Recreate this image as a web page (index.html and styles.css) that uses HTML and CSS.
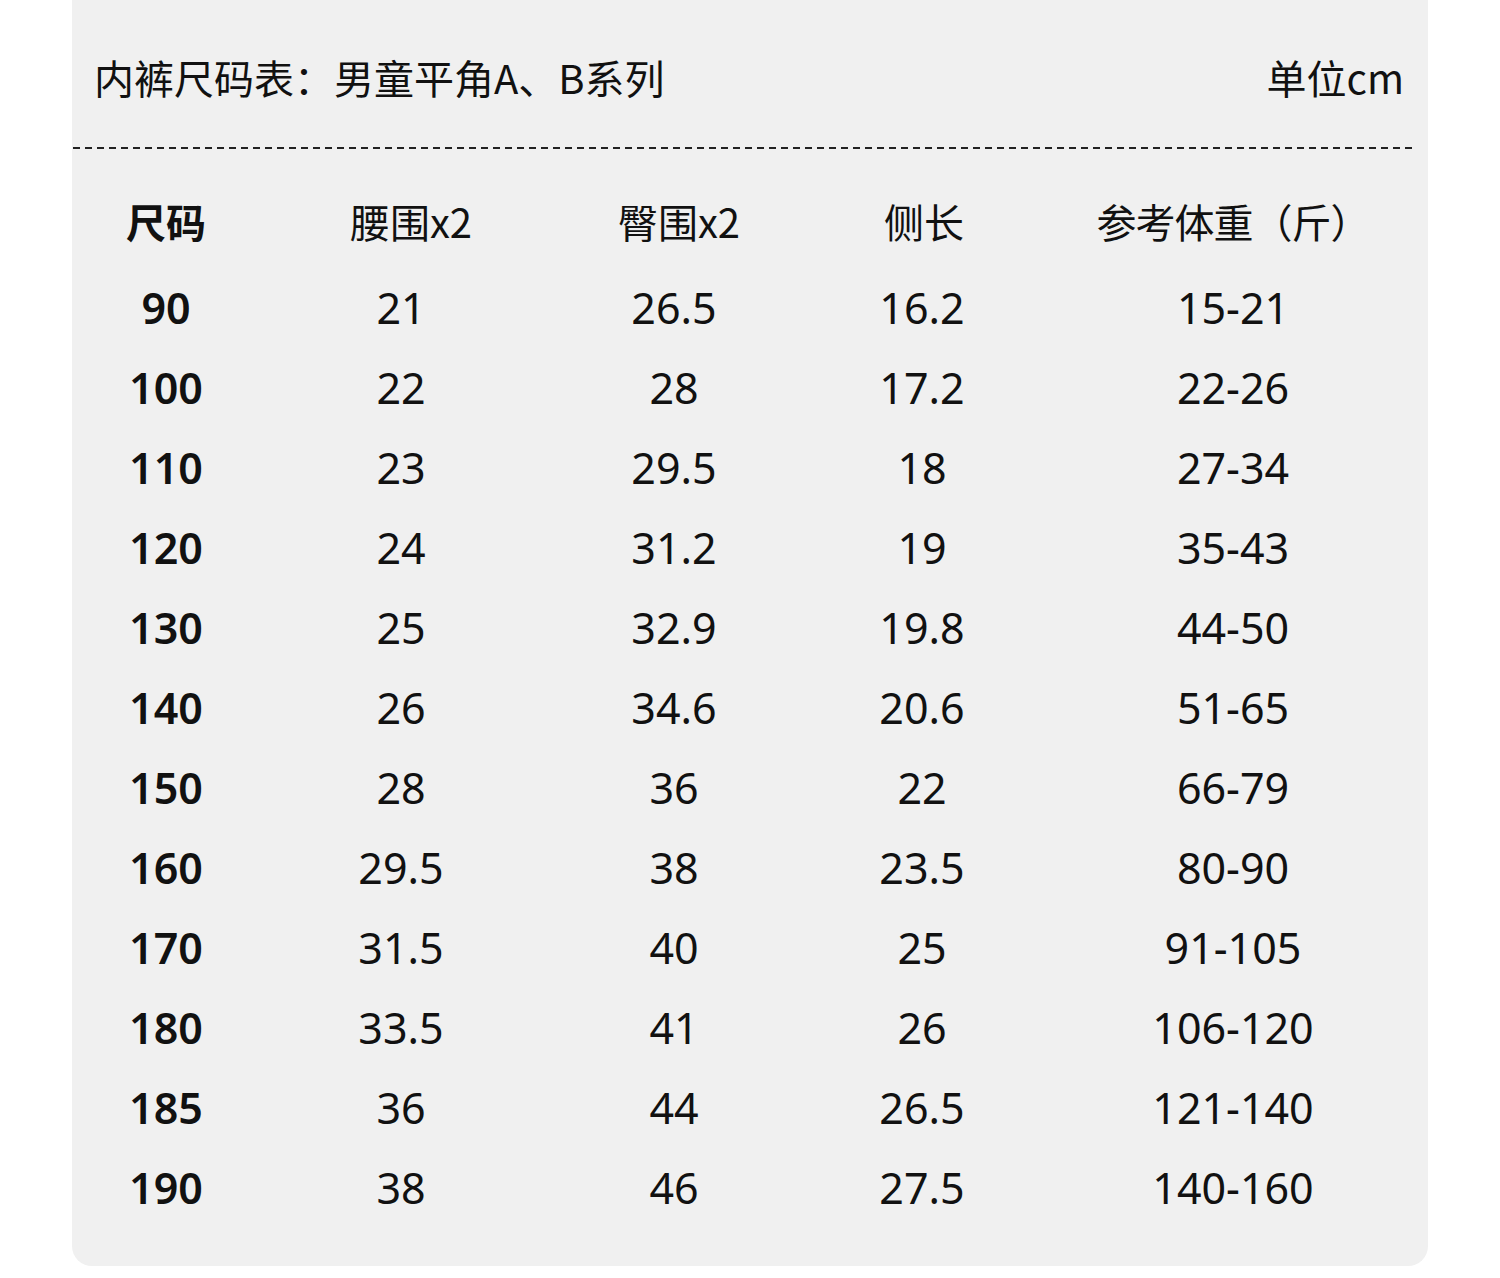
FILE: index.html
```html
<!DOCTYPE html>
<html lang="zh-CN">
<head>
<meta charset="utf-8">
<title>内裤尺码表</title>
<link rel="stylesheet" href="styles.css">
</head>
<body>
<div class="card">
  <div class="card-head">
    <span class="title">内裤尺码表：男童平角A、B系列</span>
    <span class="unit">单位cm</span>
  </div>
  <div class="dash"></div>
  <div class="table">
    <div class="row head">
      <div class="cell first">尺码</div>
      <div class="cell h2">腰围x2</div>
      <div class="cell h3">臀围x2</div>
      <div class="cell h4">侧长</div>
      <div class="cell h5">参考体重（斤）</div>
    </div>
    <div class="row"><div class="cell first">90</div><div class="cell">21</div><div class="cell">26.5</div><div class="cell">16.2</div><div class="cell">15-21</div></div>
    <div class="row"><div class="cell first">100</div><div class="cell">22</div><div class="cell">28</div><div class="cell">17.2</div><div class="cell">22-26</div></div>
    <div class="row"><div class="cell first">110</div><div class="cell">23</div><div class="cell">29.5</div><div class="cell">18</div><div class="cell">27-34</div></div>
    <div class="row"><div class="cell first">120</div><div class="cell">24</div><div class="cell">31.2</div><div class="cell">19</div><div class="cell">35-43</div></div>
    <div class="row"><div class="cell first">130</div><div class="cell">25</div><div class="cell">32.9</div><div class="cell">19.8</div><div class="cell">44-50</div></div>
    <div class="row"><div class="cell first">140</div><div class="cell">26</div><div class="cell">34.6</div><div class="cell">20.6</div><div class="cell">51-65</div></div>
    <div class="row"><div class="cell first">150</div><div class="cell">28</div><div class="cell">36</div><div class="cell">22</div><div class="cell">66-79</div></div>
    <div class="row"><div class="cell first">160</div><div class="cell">29.5</div><div class="cell">38</div><div class="cell">23.5</div><div class="cell">80-90</div></div>
    <div class="row"><div class="cell first">170</div><div class="cell">31.5</div><div class="cell">40</div><div class="cell">25</div><div class="cell">91-105</div></div>
    <div class="row"><div class="cell first">180</div><div class="cell">33.5</div><div class="cell">41</div><div class="cell">26</div><div class="cell">106-120</div></div>
    <div class="row"><div class="cell first">185</div><div class="cell">36</div><div class="cell">44</div><div class="cell">26.5</div><div class="cell">121-140</div></div>
    <div class="row"><div class="cell first">190</div><div class="cell">38</div><div class="cell">46</div><div class="cell">27.5</div><div class="cell">140-160</div></div>
  </div>
</div>
</body>
</html>
```

FILE: styles.css
```css
* { box-sizing: border-box; }
html, body {
  margin: 0;
  padding: 0;
  background: #ffffff;
}
body {
  font-family: "Noto Sans", "Noto Sans CJK SC", sans-serif;
  color: #111111;
}
.card {
  margin: 0 72px;
  width: 1356px;
  height: 1266px;
  background: #f0f0f0;
  border-radius: 0 0 20px 20px;
  padding-top: 53px;
}
.card-head {
  display: flex;
  justify-content: space-between;
  align-items: center;
  padding: 0 24px 0 22px;
  height: 48px;
  font-family: "Noto Sans CJK SC", sans-serif;
  font-size: 40px;
  line-height: 48px;
}
.dash {
  margin: 46px 15px 0 1px;
  height: 2px;
  background: repeating-linear-gradient(to right, #222 0, #222 7px, transparent 7px, transparent 12px);
}
.table {
  margin-top: 32px;
  display: flex;
  flex-direction: column;
}
.row {
  display: grid;
  grid-template-columns: 188px 282px 264px 232px 390px;
  height: 80px;
  align-items: center;
  font-size: 43px;
}
.row.head {
  margin-bottom: 7px;
  font-family: "Noto Sans CJK SC", sans-serif;
  font-size: 40px;
}
.cell {
  text-align: center;
  line-height: 80px;
  white-space: nowrap;
}
.cell.first {
  font-weight: 600;
}
.row.head .cell.first { font-weight: 700; }
.cell.h2 { padding-left: 20px; }
.cell.h3 { padding-left: 10px; }
.cell.h4 { padding-left: 4px; }
.cell.h5 { letter-spacing: -1px; }
```
